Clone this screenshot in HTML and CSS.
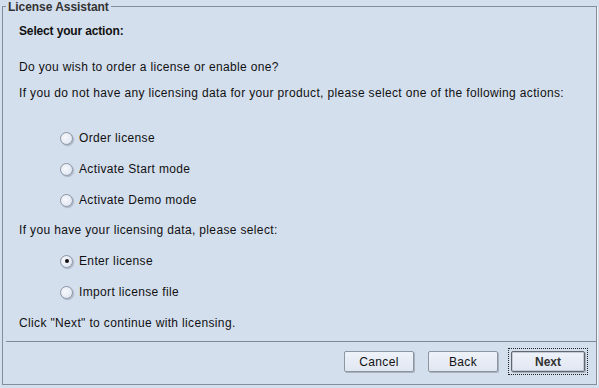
FILE: index.html
```html
<!DOCTYPE html>
<html lang="en">
<head>
    <meta charset="UTF-8">
    <title>License Assistant</title>
    <link rel="stylesheet" href="styles.css">
</head>
<body>

    <!-- Wizard panel with titled border -->
    <div class="wizard">
        <div class="wizard-title">License Assistant</div>

        <div class="wizard-body">
            <div class="line heading">Select your action:</div>
            <div class="line gap-20">Do you wish to order a license or enable one?</div>
            <div class="line gap-10">If you do not have any licensing data for your product, please select one of the following actions:</div>

            <label class="option gap-29"><input type="radio" name="action"> Order license</label>
            <label class="option gap-15"><input type="radio" name="action"> Activate Start mode</label>
            <label class="option gap-15"><input type="radio" name="action"> Activate Demo mode</label>

            <div class="line gap-14">If you have your licensing data, please select:</div>

            <label class="option gap-15"><input type="radio" name="action" checked> Enter license</label>
            <label class="option gap-15"><input type="radio" name="action"> Import license file</label>

            <div class="line gap-15">Click "Next" to continue with licensing.</div>
        </div>

        <div class="separator"></div>

        <div class="button-bar">
            <button class="btn">Cancel</button>
            <button class="btn">Back</button>
            <span class="focus-ring"><button class="btn btn-default">Next</button></span>
        </div>
    </div>

</body>
</html>
```

FILE: styles.css
```css
/* Page */
body {
    margin: 0;
    padding-top: 6px;
    background-color: #d4dfee;
    font-family: 'Liberation Sans', Arial, sans-serif;
    font-size: 12px;
    color: #111;
}

/* Outer titled border */
.wizard {
    margin: 0 2px;
    border: 1px solid #858d98;
    box-shadow: 1px 1px 0 #f2f5fa;
}

/* title sits over the top border line */
.wizard-title {
    display: table;
    margin: -6px 0 0 3px;
    padding: 0 2px;
    font-weight: bold;
    line-height: 13px;
    letter-spacing: -0.05px;
    color: #333;
    background-color: #d4dfee;
}

.wizard-body {
    padding: 9px 16px 0 16px;
}

.line,
.option {
    display: flex;
    align-items: center;
    height: 16px;
    line-height: 16px;
    letter-spacing: 0.35px;
    white-space: nowrap;
}

.heading {
    font-weight: bold;
    letter-spacing: -0.15px;
}

.option {
    margin-left: 41px;
    gap: 6px;
}

/* vertical rhythm between rows */
.gap-10 { margin-top: 10px; }
.gap-14 { margin-top: 14px; }
.gap-15 { margin-top: 15px; }
.gap-20 { margin-top: 20px; }
.gap-29 { margin-top: 29px; }

/* Radio buttons */
.option input {
    appearance: none;
    -webkit-appearance: none;
    flex: none;
    width: 13px;
    height: 13px;
    margin: 0;
    border: 1px solid #8d96a3;
    border-radius: 50%;
    background: radial-gradient(circle at 40% 40%, #f6f8fc 0%, #e3e8f3 70%, #d6dcea 100%);
    box-shadow: 1px 1px 1px rgba(80, 90, 110, 0.35);
    box-sizing: border-box;
    display: flex;
    align-items: center;
    justify-content: center;
}

.option input:checked::after {
    content: "";
    width: 4px;
    height: 4px;
    border-radius: 50%;
    background: #111;
}

.separator {
    margin: 10px 0 0 3px;
    border-top: 1px solid #7e8792;
}

/* Buttons */
.button-bar {
    display: flex;
    justify-content: flex-end;
    align-items: center;
    gap: 14px;
    padding: 6px 8px 9px 0;
}

.btn {
    width: 70px;
    height: 21px;
    padding: 0;
    font-family: 'Liberation Sans', Arial, sans-serif;
    font-size: 12px;
    letter-spacing: 0.35px;
    color: #111;
    background: linear-gradient(#eef2f9, #e1e7f2);
    border: 1px solid #8c95a2;
    border-radius: 2px;
    box-shadow: 1px 1px 0 #a9b1bd;
}

.focus-ring {
    display: flex;
    padding: 2px;
    margin-left: -4px;
    border: 1px dotted #222;
}

.btn-default {
    width: 74px;
    font-weight: bold;
    letter-spacing: 0;
    color: #333;
    border-color: #5f6772;
    box-shadow: inset 0 0 0 1px #c5ccd8, 1px 1px 0 #a9b1bd;
}
```
